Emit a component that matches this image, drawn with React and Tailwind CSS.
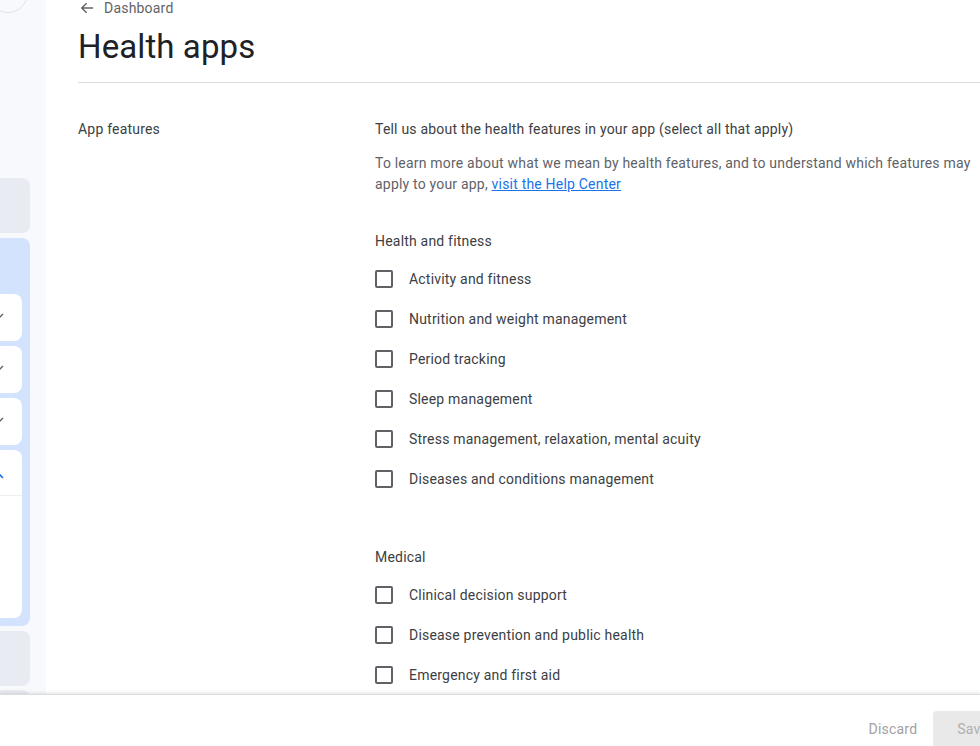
import React from "react";

const fitness = [
  "Activity and fitness",
  "Nutrition and weight management",
  "Period tracking",
  "Sleep management",
  "Stress management, relaxation, mental acuity",
  "Diseases and conditions management",
];
const medical = [
  "Clinical decision support",
  "Disease prevention and public health",
  "Emergency and first aid",
  "Medical device",
];

function Check({ blue }) {
  return (
    <svg width="14" height="14" viewBox="0 0 14 14" className="ml-[-10px] mt-[19px] shrink-0" fill="none">
      {blue ? (
        <path d="M3 9 L8 4 L13 9" stroke="#1a73e8" strokeWidth="1.6" />
      ) : (
        <path d="M3 11 L8 6 L13 1" stroke="#5f6368" strokeWidth="1.4" />
      )}
    </svg>
  );
}

function Row({ label }) {
  return (
    <div className="flex h-[40px] items-center gap-[16px]">
      <div className="h-[18px] w-[18px] shrink-0 rounded-[2px] border-2 border-[#5f6368]" />
      <span className="text-[14px] leading-[20px] tracking-[0.2px] text-[#3c4043]">{label}</span>
    </div>
  );
}

export default function App() {
  return (
    <div className="flex h-[746px] w-[980px] flex-col overflow-hidden bg-white" style={{ fontFamily: "Roboto, 'Noto Sans', sans-serif" }}>
      <div className="flex min-h-0 flex-1">
        <aside className="flex w-[46px] shrink-0 flex-col bg-[#f8f9fd]">
          <div className="ml-[-12px] mt-[-27px] h-[40px] w-[40px] shrink-0 rounded-full border border-[#dde3ee]" />
          <div className="mt-[165px] h-[55px] w-[30px] shrink-0 rounded-r-[8px] bg-[#e8ebf2]" />
          <div className="mt-[5px] flex h-[388px] w-[30px] shrink-0 flex-col gap-[5px] rounded-r-[8px] bg-[#d3e3fd] pb-[8px] pr-[8px] pt-[56px]">
            <div className="flex h-[47px] shrink-0 rounded-r-[8px] bg-white"><Check /></div>
            <div className="flex h-[47px] shrink-0 rounded-r-[8px] bg-white"><Check /></div>
            <div className="flex h-[47px] shrink-0 rounded-r-[8px] bg-white"><Check /></div>
            <div className="flex min-h-0 flex-1 flex-col rounded-r-[8px] bg-white">
              <div className="flex h-[46px] shrink-0 border-b border-[#eceff3]"><Check blue /></div>
            </div>
          </div>
          <div className="mt-[5px] h-[55px] w-[30px] shrink-0 rounded-r-[8px] bg-[#e8ebf2]" />
          <div className="mt-[4px] h-[55px] w-[30px] shrink-0 rounded-r-[8px] bg-[#e8ebf2]" />
        </aside>
        <main className="min-w-0 flex-1 overflow-hidden pl-[32px]">
          <div className="w-[1000px]">
            <div className="mt-[-2px] flex h-[20px] items-center gap-[10px] pl-[2px] text-[#5f6368]">
              <svg width="14" height="14" viewBox="0 0 16 16" fill="none">
                <path d="M15 8H2M7.5 2.5L2 8l5.5 5.5" stroke="#5f6368" strokeWidth="1.6" />
              </svg>
              <span className="text-[14px] leading-[20px] tracking-[0.2px]">Dashboard</span>
            </div>
            <h1 className="mt-[9px] text-[33px] font-normal leading-[40px] tracking-[0.1px] text-[#202124]">Health apps</h1>
            <div className="mt-[15px] h-px bg-[#dadce0]" />
            <div className="mt-[36px] flex text-[14px] tracking-[0.2px]">
              <div className="w-[297px] shrink-0 leading-[20px] text-[#3c4043]">App features</div>
              <div className="w-[610px]">
                <div className="leading-[20px] text-[#3c4043]">Tell us about the health features in your app (select all that apply)</div>
                <p className="mt-[14px] leading-[21px] text-[#5f6368]">
                  To learn more about what we mean by health features, and to understand which features may apply to your app,{" "}
                  <a className="text-[#1a73e8] underline">visit the Help Center</a>
                </p>
                <div className="mt-[36px] leading-[20px] text-[#3c4043]">Health and fitness</div>
                <div className="mt-[8px] flex flex-col">
                  {fitness.map((f) => <Row key={f} label={f} />)}
                </div>
                <div className="mt-[48px] leading-[20px] text-[#3c4043]">Medical</div>
                <div className="mt-[8px] flex flex-col">
                  {medical.map((f) => <Row key={f} label={f} />)}
                </div>
              </div>
            </div>
          </div>
        </main>
      </div>
      <footer className="relative h-[52px] shrink-0 border-t border-[#dadce0] bg-white shadow-[0_-1px_3px_rgba(60,64,67,0.15)]">
        <div className="flex h-full w-[1024px] items-end justify-end gap-[16px] pr-[12px]">
          <span className="mb-[7px] text-[14px] leading-[20px] tracking-[0.2px] text-[#a2a2a2]">Discard</span>
          <div className="mb-[-1px] flex h-[36px] items-center rounded-t-[4px] bg-[#e9e9e9] px-[24px] text-[14px] tracking-[0.2px] text-[#b0b0b0]">Save</div>
        </div>
      </footer>
    </div>
  );
}
